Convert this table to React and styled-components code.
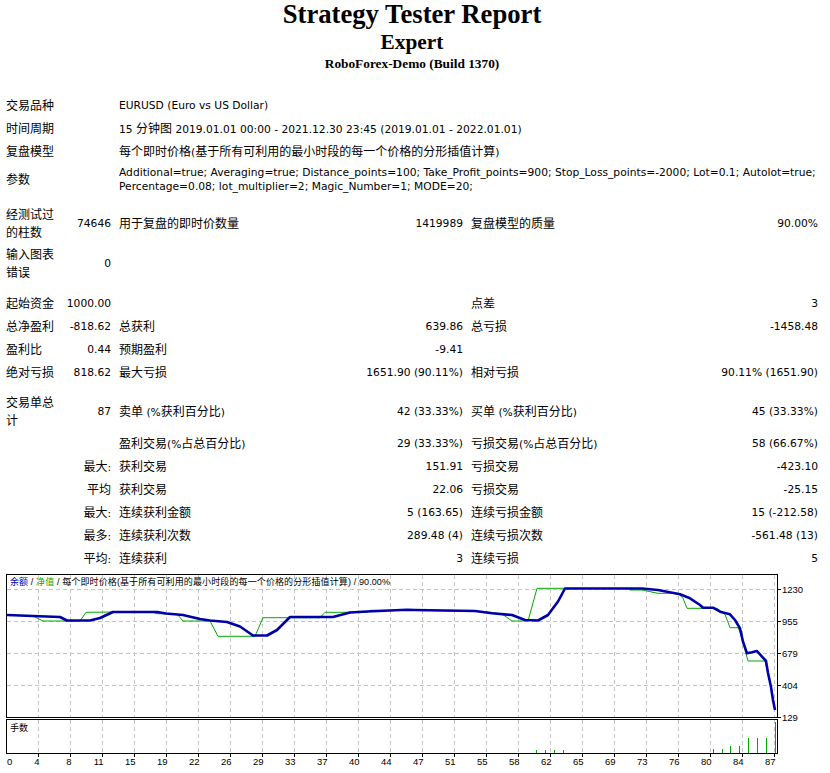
import React from 'react';
import styled, { createGlobalStyle } from 'styled-components';

const GlobalStyle = createGlobalStyle`
  html, body {
    margin: 0;
    padding: 0;
    background: #fff;
    overflow: hidden;
  }
  body {
    font-family: "DejaVu Sans", "Noto Sans CJK SC", Verdana, sans-serif;
    font-size: 10.7px;
    color: #000;
  }
`;

const Page = styled.div`
  width: 820px;
  margin-left: 2px;
`;

const Header = styled.header`
  display: flex;
  flex-direction: column;
  align-items: center;
  font-family: "Liberation Serif", "Noto Sans CJK SC", serif;
  font-weight: bold;
  margin-bottom: 22px;
`;

const Title = styled.div`
  font-size: 26.67px;
  line-height: 28px;
`;

const Subtitle = styled.div`
  font-size: 21.33px;
  line-height: 28px;
`;

const Server = styled.div`
  font-size: 13.33px;
  line-height: 16px;
`;

const Row = styled.div`
  display: grid;
  grid-template-columns: 57px 56px 176px 176px 176px 179px;
  align-items: center;
  height: ${(p) => p.$h || 23}px;
  margin-bottom: ${(p) => p.$gap || 0}px;
`;

const Cell = styled.div`
  padding: 0 4px;
  grid-column: ${(p) => (p.$span ? `span ${p.$span}` : 'auto')};
  text-align: ${(p) => (p.$right ? 'right' : 'left')};
  white-space: ${(p) => (p.$wrap ? 'normal' : 'nowrap')};
  line-height: ${(p) => p.$lh || 16}px;
`;

// Chinese runs are set a little larger than the Latin ones, as in the report
const Han = styled.span`
  font-family: "Noto Sans CJK SC", sans-serif;
  font-size: 12px;
`;

const ChartSvg = styled.svg`
  display: block;
  width: 830px;
  height: 203px;
  font-family: "Liberation Sans", "Noto Sans CJK SC", Arial, sans-serif;
`;

const HAN_RE = /([\u3000-\u9fff\uff00-\uffef]+)/;

const Txt = ({ children }) => {
  if (typeof children !== 'string') return children;
  return children
    .split(HAN_RE)
    .filter(Boolean)
    .map((part, i) => (HAN_RE.test(part) ? <Han key={i}>{part}</Han> : part));
};

// top block: label over two columns, value over the rest
const InfoRow = ({ label, h, gap, lh, children }) => (
  <Row $h={h} $gap={gap}>
    <Cell $span={2}><Txt>{label}</Txt></Cell>
    <Cell $span={4} $lh={lh}><Txt>{children}</Txt></Cell>
  </Row>
);

const StatRow = ({ cells, h, gap }) => (
  <Row $h={h} $gap={gap}>
    {cells.map((c, i) => (
      <Cell key={i} $right={i % 2 === 1} $wrap={i === 0}>
        <Txt>{c}</Txt>
      </Cell>
    ))}
  </Row>
);

const stats = [
  { cells: ['起始资金', '1000.00', '', '', '点差', '3'] },
  { cells: ['总净盈利', '-818.62', '总获利', '639.86', '总亏损', '-1458.48'] },
  { cells: ['盈利比', '0.44', '预期盈利', '-9.41', '', ''] },
  { cells: ['绝对亏损', '818.62', '最大亏损', '1651.90 (90.11%)', '相对亏损', '90.11% (1651.90)'], gap: 8 },
  { cells: ['交易单总计', '87', '卖单 (%获利百分比)', '42 (33.33%)', '买单 (%获利百分比)', '45 (33.33%)'], h: 40 },
  { cells: ['', '', '盈利交易(%占总百分比)', '29 (33.33%)', '亏损交易(%占总百分比)', '58 (66.67%)'] },
  { cells: ['', '最大:', '获利交易', '151.91', '亏损交易', '-423.10'] },
  { cells: ['', '平均', '获利交易', '22.06', '亏损交易', '-25.15'] },
  { cells: ['', '最大:', '连续获利金额', '5 (163.65)', '连续亏损金额', '15 (-212.58)'] },
  { cells: ['', '最多:', '连续获利次数', '289.48 (4)', '连续亏损次数', '-561.48 (13)'] },
  { cells: ['', '平均:', '连续获利', '3', '连续亏损', '5'] },
];

const balance = [
  [7, 615], [33, 616], [60, 617], [67, 620.5], [90, 620.5], [100, 618], [113, 612],
  [157, 612], [166, 613.5], [183, 615], [200, 619], [210, 620.5], [227, 622],
  [240, 626.5], [253, 635.5], [267, 635.5], [277, 630], [290, 617], [333, 617],
  [350, 612.5], [367, 611.5], [407, 609.7], [415, 610], [475, 611], [492, 613.3],
  [512, 615], [525, 620], [538, 620.5], [548, 615], [558, 601.5], [565, 588.5],
  [642, 588.5], [658, 590], [680, 594.3], [690, 598.3], [700, 605], [703, 607.7],
  [713, 607.7], [720, 611.7], [730, 614.3], [735, 620], [740, 628.3], [743, 641.7],
  [747, 653.3], [752, 652.3], [757, 651], [762, 656.7], [766, 661], [768, 673],
  [771, 687], [773, 700], [775, 710],
];

const equity = [
  [7, 615], [33, 616], [43, 621], [80, 621], [86, 612.3], [113, 612], [152, 612],
  [157, 613.7], [177, 614], [183, 621], [210, 621], [218, 636.3], [255, 636.3],
  [263, 617.7], [320, 617.7], [325, 612.3], [367, 612.3], [370, 610.3], [415, 610.5],
  [475, 611], [492, 612.5], [502, 614], [512, 621], [528, 621], [537, 588.3],
  [628, 588.3], [630, 590], [642, 590], [658, 593.3], [678, 593.3], [683, 598.3],
  [687, 608.3], [717, 608.3], [723, 612.7], [725, 614.3], [730, 627.7], [738, 627.7],
  [740, 631.7], [748, 661], [765, 661], [768, 673], [771, 687], [773, 700], [775, 710],
];

const xLabels = ['0', '4', '8', '11', '15', '19', '22', '26', '29', '33', '37', '40', '44',
  '47', '51', '55', '58', '62', '65', '69', '73', '76', '80', '84', '87'];

const yLabels = [['1230', 589], ['955', 621], ['679', 653], ['404', 685], ['129', 717]];

const volumes = [
  [536, 750], [545, 750], [554, 750], [563, 750], [713, 749], [722, 749], [730, 746],
  [739, 746], [748, 738], [757, 738], [766, 738], [775, 722],
];

const toPoints = (arr) => arr.map(([x, y]) => `${x},${y}`).join(' ');

const Chart = () => {
  const gridX = Array.from({ length: 24 }, (_, i) => 6 + 32 * (i + 1));
  return (
    <ChartSvg viewBox="0 570 830 203">
      <g stroke="#c4c4c4" strokeDasharray="4 3" shapeRendering="crispEdges">
        {gridX.map((x) => (
          <line key={x} x1={x + 0.5} y1={575} x2={x + 0.5} y2={717} />
        ))}
        {gridX.map((x) => (
          <line key={`v${x}`} x1={x + 0.5} y1={720} x2={x + 0.5} y2={753} />
        ))}
        {[589, 621, 653, 685].map((y) => (
          <line key={y} x1={7} y1={y + 0.5} x2={777} y2={y + 0.5} />
        ))}
      </g>

      <text x={10} y={584.5} fontSize="9" textLength="380" lengthAdjust="spacing">
        <tspan fill="#0000aa">余额</tspan>
        <tspan fill="#000"> / </tspan>
        <tspan fill="#00aa00">净值</tspan>
        <tspan fill="#000"> / 每个即时价格(基于所有可利用的最小时段的每一个价格的分形插值计算) / 90.00%</tspan>
      </text>

      <polyline points={toPoints(equity)} fill="none" stroke="#00aa00" strokeWidth="1" />
      <polyline points={toPoints(balance)} fill="none" stroke="#0000aa" strokeWidth="2.6" strokeLinejoin="round" />

      <g stroke="#000" fill="none" shapeRendering="crispEdges">
        <rect x={6.5} y={574.5} width={771} height={143} />
        <rect x={6.5} y={719.5} width={771} height={34} />
        {yLabels.map(([, y]) => (
          <line key={y} x1={778} y1={y + 0.5} x2={781} y2={y + 0.5} />
        ))}
        {gridX.map((x) => (
          <line key={x} x1={x + 0.5} y1={754} x2={x + 0.5} y2={757} />
        ))}
      </g>

      <text x={10} y={730.5} fontSize="9">手数</text>

      <g stroke="#00aa00" shapeRendering="crispEdges">
        {volumes.map(([x, top]) => (
          <line key={x} x1={x + 0.5} y1={top} x2={x + 0.5} y2={753} />
        ))}
      </g>

      <g fontSize="9.5" fill="#000">
        {yLabels.map(([t, y]) => (
          <text key={t} x={782} y={y + 3.5}>{t}</text>
        ))}
        {xLabels.map((t, i) => (
          <text
            key={t}
            x={i === 0 ? 7 : 6 + 32 * i + 1.5}
            y={764.5}
            textAnchor={i === 0 ? 'start' : 'end'}
          >
            {t}
          </text>
        ))}
      </g>
    </ChartSvg>
  );
};

export default function App() {
  return (
    <>
      <GlobalStyle />
      <Page>
        <Header>
          <Title>Strategy Tester Report</Title>
          <Subtitle>Expert</Subtitle>
          <Server>RoboForex-Demo (Build 1370)</Server>
        </Header>

        <InfoRow label="交易品种">EURUSD (Euro vs US Dollar)</InfoRow>
        <InfoRow label="时间周期">15 分钟图 2019.01.01 00:00 - 2021.12.30 23:45 (2019.01.01 - 2022.01.01)</InfoRow>
        <InfoRow label="复盘模型">每个即时价格(基于所有可利用的最小时段的每一个价格的分形插值计算)</InfoRow>
        <InfoRow label="参数" h={34} gap={7} lh={14}>
          <>
            Additional=true; Averaging=true; Distance_points=100; Take_Profit_points=900; Stop_Loss_points=-2000; Lot=0.1; Autolot=true;
            <br />
            Percentage=0.08; lot_multiplier=2; Magic_Number=1; MODE=20;
          </>
        </InfoRow>

        <StatRow h={40} cells={['经测试过的柱数', '74646', '用于复盘的即时价数量', '1419989', '复盘模型的质量', '90.00%']} />
        <StatRow h={40} gap={8} cells={['输入图表错误', '0', '', '', '', '']} />

        {stats.map((r, i) => (
          <StatRow key={i} h={r.h} gap={r.gap} cells={r.cells} />
        ))}
      </Page>
      <Chart />
    </>
  );
}
